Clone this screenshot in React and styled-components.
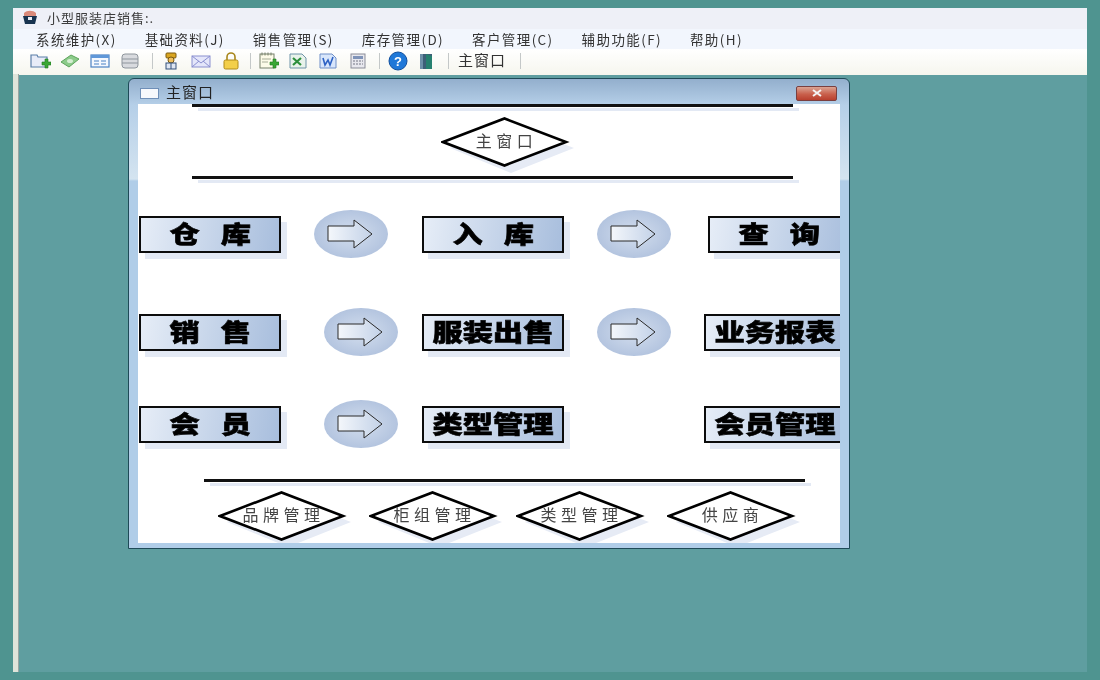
import styled, { createGlobalStyle } from "styled-components";

const GlobalStyle = createGlobalStyle`
  html, body { margin: 0; padding: 0; background: #4f9490; }
  body { font-family: "Noto Sans CJK SC", "Liberation Sans", sans-serif; }
`;

const MENUS = ["系统维护(X)", "基础资料(J)", "销售管理(S)", "库存管理(D)", "客户管理(C)", "辅助功能(F)", "帮助(H)"];

const ROWS = [
  {
    gap: 31,
    items: [
      { label: "仓 库", left: 1 },
      { arrow: true, left: 33 },
      { label: "入 库", left: 34 },
      { arrow: true, left: 33 },
      { label: "查 询", left: 37 },
    ],
  },
  {
    gap: 50,
    items: [
      { label: "销 售", left: 1 },
      { arrow: true, left: 43 },
      { label: "服装出售", left: 24 },
      { arrow: true, left: 33 },
      { label: "业务报表", left: 33 },
    ],
  },
  {
    gap: 44,
    items: [
      { label: "会 员", left: 1 },
      { arrow: true, left: 43 },
      { label: "类型管理", left: 24 },
      { label: "会员管理", left: 140 },
    ],
  },
];

const BOTTOM = [
  { label: "品牌管理", left: 80 },
  { label: "柜组管理", left: 24 },
  { label: "类型管理", left: 20 },
  { label: "供应商", left: 24 },
];

//Small toolbar drawings, all on a 22x20 box.
const ToolIcon = ({ children }) => (
  <svg width="22" height="20" viewBox="0 0 22 20">
    {children}
  </svg>
);

const Plus = () => (
  <path d="M13 11h3V8h3v3h3v3h-3v3h-3v-3h-3z" fill="#3aa635" stroke="#1f7a20" strokeWidth=".6" />
);

const TOOLS_A = [
  <ToolIcon key="folder">
    <path d="M2 4h6l1 2h9v10H2z" fill="#e8ecf8" stroke="#5b7fa8" strokeWidth="1.2" />
    <Plus />
  </ToolIcon>,
  <ToolIcon key="money">
    <path d="M2 11l10-7 8 4-10 8z" fill="#8ccb8a" stroke="#5ea45c" />
    <ellipse cx="11" cy="10" rx="3" ry="2" fill="#d5eed2" />
  </ToolIcon>,
  <ToolIcon key="table">
    <rect x="2" y="4" width="18" height="12" fill="#f4f8fe" stroke="#4b82c4" strokeWidth="1.2" />
    <rect x="2" y="4" width="18" height="3" fill="#5f97d8" />
    <path d="M5 10h5M12 10h5M5 13h5M12 13h5" stroke="#4b82c4" />
  </ToolIcon>,
  <ToolIcon key="stack">
    <rect x="3" y="3" width="16" height="14" rx="3" fill="#d8dade" stroke="#8e959c" />
    <path d="M3 8h16M3 12h16" stroke="#8e959c" />
  </ToolIcon>,
];

const TOOLS_B = [
  <ToolIcon key="user">
    <rect x="6" y="2" width="10" height="5" rx="1" fill="#d9a520" stroke="#7a5a10" />
    <circle cx="11" cy="9" r="3" fill="#f0c060" stroke="#7a5a10" />
    <rect x="6" y="12" width="10" height="6" fill="#dfe6f2" stroke="#33507a" />
    <path d="M11 12v6" stroke="#33507a" />
  </ToolIcon>,
  <ToolIcon key="mail">
    <rect x="2" y="5" width="18" height="11" fill="#e4e6fa" stroke="#8a8fd0" />
    <path d="M2 5l9 7 9-7M2 16l7-6M20 16l-7-6" fill="none" stroke="#8a8fd0" />
  </ToolIcon>,
  <ToolIcon key="lock">
    <path d="M7 9V6a4 4 0 018 0v3" fill="none" stroke="#a8861a" strokeWidth="1.6" />
    <rect x="4" y="9" width="14" height="9" rx="1.5" fill="#f3cf4a" stroke="#b08a18" />
  </ToolIcon>,
];

const TOOLS_C = [
  <ToolIcon key="note">
    <rect x="3" y="3" width="14" height="14" fill="#fdfbe8" stroke="#77806a" />
    <path d="M5 1.5v3M8 1.5v3M11 1.5v3M14 1.5v3" stroke="#77806a" />
    <path d="M5 8h9M5 11h6" stroke="#a8ad98" />
    <Plus />
  </ToolIcon>,
  <ToolIcon key="excel">
    <path d="M3 3h12l4 4v10H3z" fill="#e8f2ea" stroke="#6f94a8" />
    <path d="M6 7l8 7M14 7l-8 7" stroke="#2d8f3c" strokeWidth="2.2" />
  </ToolIcon>,
  <ToolIcon key="word">
    <path d="M3 3h12l4 4v10H3z" fill="#d8e6fb" stroke="#6f8fc8" />
    <path d="M6 7l2 7 3-5 2 5 3-8" fill="none" stroke="#2d62c4" strokeWidth="1.6" />
  </ToolIcon>,
  <ToolIcon key="calc">
    <rect x="4" y="3" width="14" height="14" fill="#e8e8ee" stroke="#8a8c98" />
    <rect x="6" y="5" width="10" height="3" fill="#7f93b8" />
    <path d="M6 10h10M6 13h10" stroke="#9a9ca8" strokeWidth="1.5" strokeDasharray="2 1" />
  </ToolIcon>,
];

const TOOLS_D = [
  <ToolIcon key="help">
    <circle cx="11" cy="10" r="9" fill="#1f78d8" stroke="#0f4f9e" />
    <text x="11" y="14.5" fontSize="13" fontWeight="700" fontFamily="Liberation Sans" textAnchor="middle" fill="#fff">
      ?
    </text>
  </ToolIcon>,
  <ToolIcon key="door">
    <rect x="5" y="3" width="12" height="15" fill="#3d5f78" />
    <path d="M11 3l6 2v13h-6z" fill="#26806f" />
    <rect x="5" y="3" width="3" height="15" fill="#6d8fa8" />
  </ToolIcon>,
];

const ArrowBadge = () => (
  <svg width="74" height="48" viewBox="0 0 74 48">
    <defs>
      <radialGradient id="badge" cx="50%" cy="50%" r="60%">
        <stop offset="0%" stopColor="#d3deee" />
        <stop offset="100%" stopColor="#adbfdc" />
      </radialGradient>
      <linearGradient id="arrowFill" x1="0" x2="1">
        <stop offset="0%" stopColor="#f4f7fb" />
        <stop offset="100%" stopColor="#c3d2e8" />
      </linearGradient>
    </defs>
    <ellipse cx="37" cy="24" rx="37" ry="24" fill="url(#badge)" />
    <path d="M14 16H40V10L58 24L40 38V31H14Z" fill="url(#arrowFill)" stroke="#2a2a2a" strokeWidth="1" />
  </svg>
);

const DiamondShape = () => (
  <DiamondSvg width="134" height="56" viewBox="0 0 134 56">
    <polygon points="9,31 70,7 133,31 70,56" fill="#e6ebf5" />
    <polygon points="2,25 63.5,1.5 125,25 63.5,48.5" fill="#fff" stroke="#000" strokeWidth="2.6" />
  </DiamondSvg>
);

const Diamond = ({ label, left }) => (
  <DiamondWrap $left={left}>
    <DiamondShape />
    <DiamondLabel>{label}</DiamondLabel>
  </DiamondWrap>
);

const App = () => {
  return (
    <>
      <GlobalStyle />
      <Screen>
        <Frame>
          <Chrome>
            <TitleBar>
              <AppIcon width="18" height="16" viewBox="0 0 18 16">
                <path d="M3 3c3-3 9-3 12 0v3H3z" fill="#d98a7a" />
                <path d="M2 6h14l-2 8H4z" fill="#17324e" />
                <rect x="7" y="7" width="4" height="3" fill="#e8eef6" />
              </AppIcon>
              <AppTitle>小型服装店销售:.</AppTitle>
            </TitleBar>
            <MenuBar>
              {MENUS.map((menu) => (
                <MenuItem key={menu}>{menu}</MenuItem>
              ))}
            </MenuBar>
            <ToolBar>
              <ToolGroup>{TOOLS_A}</ToolGroup>
              <ToolSep $left={11} $right={7} />
              <ToolGroup>{TOOLS_B}</ToolGroup>
              <ToolSep $left={8} $right={6} />
              <ToolGroup>{TOOLS_C}</ToolGroup>
              <ToolSep $left={10} $right={7} />
              <ToolGroup $gap={6}>{TOOLS_D}</ToolGroup>
              <ToolSep $left={11} $right={9} />
              <ToolText>主窗口</ToolText>
              <ToolSep $left={14} $right={0} />
            </ToolBar>
          </Chrome>
          <Workspace>
            <Window>
              <WindowTitle>
                <WindowIcon />
                <WindowName>主窗口</WindowName>
                <CloseButton>
                  <svg width="12" height="8" viewBox="0 0 12 8">
                    <path d="M2 1l8 6M10 1L2 7" stroke="#f4f4f4" strokeWidth="2" />
                  </svg>
                </CloseButton>
              </WindowTitle>
              <Client>
                <Rule $left={54} $top={0} />
                <TopDiamond>
                  <Diamond label="主窗口" left={303} />
                </TopDiamond>
                <Rule $left={54} $top={9} />
                {ROWS.map((row) => (
                  <FlowRow key={row.items[0].label} $top={row.gap}>
                    {row.items.map((item, i) =>
                      item.arrow ? (
                        <ArrowSlot key={i} $left={item.left}>
                          <ArrowBadge />
                        </ArrowSlot>
                      ) : (
                        <FlowBox key={i} $left={item.left}>
                          <FlowLabel>{item.label}</FlowLabel>
                        </FlowBox>
                      )
                    )}
                  </FlowRow>
                ))}
                <Rule $left={66} $top={31} />
                <BottomRow>
                  {BOTTOM.map((item) => (
                    <Diamond key={item.label} label={item.label} left={item.left} />
                  ))}
                </BottomRow>
              </Client>
            </Window>
          </Workspace>
        </Frame>
      </Screen>
    </>
  );
};

const Screen = styled.div`
  width: 1100px;
  height: 680px;
  padding: 8px 13px;
  box-sizing: border-box;
  background: #4f9490;
  overflow: hidden;
  filter: blur(0.4px);
`;

const Frame = styled.div`
  height: 100%;
  display: flex;
  flex-direction: column;
  background: #5f9ea0;
`;

const Chrome = styled.div`
  height: 66px;
  flex-shrink: 0;
  display: flex;
  flex-direction: column;
  border-bottom: 1px solid #e6dcdc;
  box-sizing: border-box;
`;

const TitleBar = styled.div`
  height: 22px;
  box-sizing: border-box;
  padding: 0 0 2px 8px;
  display: flex;
  align-items: center;
  gap: 8px;
  background: #eef0f7;
`;

const AppIcon = styled.svg`
  flex-shrink: 0;
`;

const AppTitle = styled.span`
  font-size: 13px;
  letter-spacing: 1px;
  color: #3c3c3c;
`;

const MenuBar = styled.div`
  height: 20px;
  box-sizing: border-box;
  padding: 0 0 1px 23px;
  display: flex;
  align-items: center;
  gap: 28px;
  background: #f2f6fd;
`;

const MenuItem = styled.span`
  font-size: 13.5px;
  letter-spacing: 1.4px;
  color: #333;
  white-space: nowrap;
`;

const ToolBar = styled.div`
  flex: 1;
  display: flex;
  align-items: center;
  padding: 0 0 3px 16px;
  background: linear-gradient(#ffffff, #f6f6ee);
`;

const ToolGroup = styled.div`
  display: flex;
  align-items: center;
  gap: ${(p) => p.$gap || 8}px;
`;

const ToolSep = styled.div`
  width: 1px;
  height: 16px;
  margin: 0 ${(p) => p.$right}px 0 ${(p) => p.$left}px;
  background: #c4c8c8;
`;

const ToolText = styled.span`
  font-size: 15px;
  letter-spacing: 1px;
  color: #333;
  margin-bottom: 2px;
`;

const Workspace = styled.div`
  flex: 1;
  padding: 4px 0 0 110px;
  border-left: 5px solid #dfe4da;
  box-shadow: inset 1px 0 0 #9aa5a2;
`;

const Window = styled.div`
  width: 722px;
  height: 471px;
  box-sizing: border-box;
  display: flex;
  flex-direction: column;
  border: 1px solid #1f4a58;
  border-radius: 6px 6px 0 0;
  padding: 0 9px 5px;
  background: linear-gradient(#93afcd 0, #b5cfe8 26px, #d4e4f0 100px, #b0cde8 102px, #b0cde8 100%);
`;

const WindowTitle = styled.div`
  height: 25px;
  box-sizing: border-box;
  padding: 3px 0 0 2px;
  flex-shrink: 0;
  display: flex;
  align-items: center;
  gap: 7px;
`;

const WindowIcon = styled.div`
  width: 17px;
  height: 9px;
  background: #f6f8fc;
  border: 1px solid #6f8fb8;
`;

const WindowName = styled.span`
  font-size: 15px;
  letter-spacing: 1px;
  color: #222;
  flex: 1;
  margin-bottom: 3px;
`;

const CloseButton = styled.div`
  width: 41px;
  height: 15px;
  box-sizing: border-box;
  display: flex;
  align-items: center;
  justify-content: center;
  margin-right: 3px;
  border: 1px solid #7a4040;
  border-radius: 2px;
  background: linear-gradient(#dba494, #c9604c 55%, #b8402e);
`;

const Client = styled.div`
  flex: 1;
  display: flex;
  flex-direction: column;
  background: #fff;
  overflow: hidden;
`;

const Rule = styled.div`
  width: 601px;
  height: 3px;
  flex-shrink: 0;
  margin: ${(p) => p.$top}px 0 0 ${(p) => p.$left}px;
  background: #111;
  box-shadow: 6px 4px 0 #e3e9f4;
`;

const TopDiamond = styled.div`
  display: flex;
  margin-top: 10px;
`;

const DiamondWrap = styled.div`
  position: relative;
  width: 127px;
  height: 50px;
  flex-shrink: 0;
  margin-left: ${(p) => p.$left}px;
  display: flex;
  align-items: center;
  justify-content: center;
`;

const DiamondSvg = styled.svg`
  position: absolute;
  left: 0;
  top: 0;
`;

const DiamondLabel = styled.span`
  position: relative;
  font-size: 16px;
  letter-spacing: 4.5px;
  margin: 0 -4px 4px 0;
  color: #444;
  white-space: nowrap;
`;

const FlowRow = styled.div`
  height: 48px;
  flex-shrink: 0;
  display: flex;
  align-items: center;
  margin-top: ${(p) => p.$top}px;
`;

const ArrowSlot = styled.div`
  width: 74px;
  height: 48px;
  flex-shrink: 0;
  margin-left: ${(p) => p.$left}px;
`;

const FlowBox = styled.div`
  width: 142px;
  height: 37px;
  box-sizing: border-box;
  flex-shrink: 0;
  display: flex;
  align-items: center;
  justify-content: center;
  margin-left: ${(p) => p.$left}px;
  border: 2.5px solid #0c0c0c;
  background: linear-gradient(100deg, #e6edf7, #a8bedd);
  box-shadow: 6px 6px 0 #e3e9f4;
`;

const FlowLabel = styled.span`
  display: inline-block;
  font-size: 24px;
  font-weight: 900;
  word-spacing: 11px;
  color: #000;
  white-space: nowrap;
  -webkit-text-stroke: 0.6px #000;
  margin-bottom: 4px;
  transform: scaleX(1.26);
`;

const BottomRow = styled.div`
  display: flex;
  margin-top: 9px;
`;

export default App;
